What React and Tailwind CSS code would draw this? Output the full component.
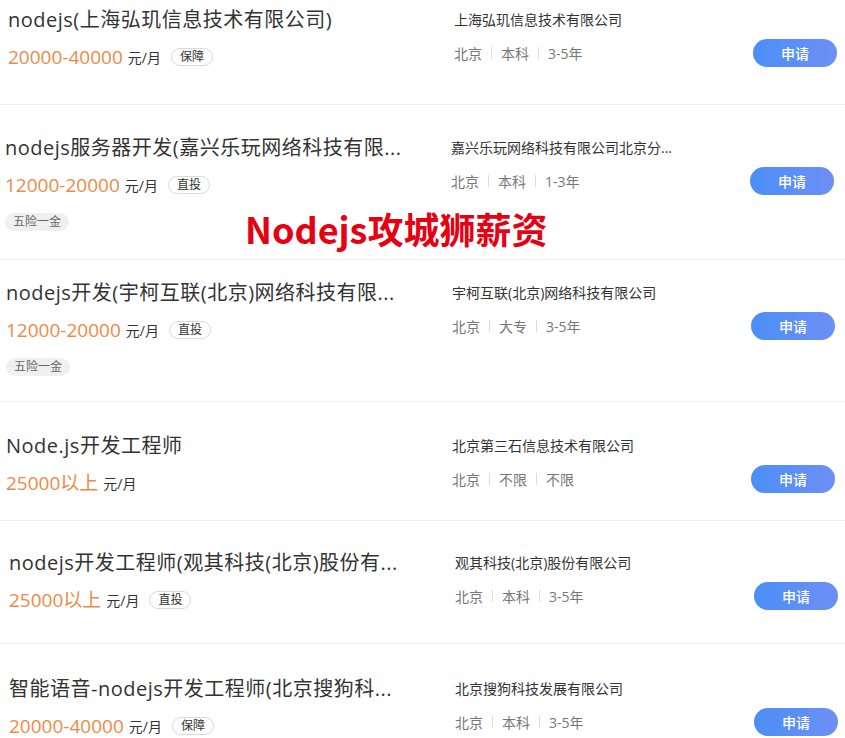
const JOBS = [
  {
    title: "nodejs(上海弘玑信息技术有限公司)",
    salary: "20000-40000",
    tag: "保障",
    company: "上海弘玑信息技术有限公司",
    meta: ["北京", "本科", "3-5年"],
    row: "h-[105px] pt-[6px] pl-[8px]",
  },
  {
    title: "nodejs服务器开发(嘉兴乐玩网络科技有限...",
    salary: "12000-20000",
    tag: "直投",
    welfare: "五险一金",
    company: "嘉兴乐玩网络科技有限公司北京分...",
    meta: ["北京", "本科", "1-3年"],
    row: "h-[155px] pt-[29px] pl-[5px]",
  },
  {
    title: "nodejs开发(宇柯互联(北京)网络科技有限...",
    salary: "12000-20000",
    tag: "直投",
    welfare: "五险一金",
    company: "宇柯互联(北京)网络科技有限公司",
    meta: ["北京", "大专", "3-5年"],
    row: "h-[142px] pt-[19px] pl-[6px]",
  },
  {
    title: "Node.js开发工程师",
    salary: "25000以上",
    company: "北京第三石信息技术有限公司",
    meta: ["北京", "不限", "不限"],
    row: "h-[119px] pt-[30px] pl-[6px]",
  },
  {
    title: "nodejs开发工程师(观其科技(北京)股份有...",
    salary: "25000以上",
    tag: "直投",
    company: "观其科技(北京)股份有限公司",
    meta: ["北京", "本科", "3-5年"],
    row: "h-[123px] pt-[28px] pl-[9px]",
  },
  {
    title: "智能语音-nodejs开发工程师(北京搜狗科...",
    salary: "20000-40000",
    tag: "保障",
    company: "北京搜狗科技发展有限公司",
    meta: ["北京", "本科", "3-5年"],
    row: "h-[95px] pt-[31px] pl-[9px]",
  },
];

function JobRow({ job, last }) {
  return (
    <div className={`flex items-start ${job.row} ${last ? "" : "border-b border-[#eeeeee]"}`}>
      {/* ── left: title / salary / welfare ── */}
      <div className="w-[446px] shrink-0">
        <div className="h-[28px] leading-[28px] text-[20px] tracking-[0.5px] text-[#333333] whitespace-nowrap">{job.title}</div>
        <div className="mt-[9px] h-[28px] flex items-center">
          <span className="text-[19px] text-[#ee8a45]">{job.salary}</span>
          <span className="ml-[5px] text-[14px] text-[#333333]">元/月</span>
          {job.tag && (
            <span className="ml-[10px] h-[18px] px-[8px] leading-[16px] text-[12px] text-[#333333] border border-[#d9d9d9] rounded-full">
              {job.tag}
            </span>
          )}
        </div>
        {job.welfare && (
          <div className="mt-[14px] flex">
            <span className="h-[18px] px-[8px] leading-[18px] text-[12px] text-[#666666] bg-[#f0f0f0] rounded-full">
              {job.welfare}
            </span>
          </div>
        )}
      </div>

      {/* ── middle: company / meta ── */}
      <div className="w-[298px] shrink-0">
        <div className="h-[28px] leading-[28px] text-[14px] text-[#333333] whitespace-nowrap">{job.company}</div>
        <div className="mt-[9px] h-[20px] flex items-center text-[14px] text-[#777777]">
          {job.meta.map((m, i) => (
            <span key={i} className="flex items-center">
              {i > 0 && <span className="mx-[9px] w-px h-[12px] bg-[#dddddd]" />}
              {m}
            </span>
          ))}
        </div>
      </div>

      {/* ── right: apply ── */}
      <button className="mt-[33px] ml-px w-[84px] h-[28px] rounded-full bg-gradient-to-r from-[#4a8ff6] to-[#6c8ff6] text-white text-[14px] font-medium">
        申请
      </button>
    </div>
  );
}

export default function App() {
  return (
    <div className="relative w-[845px] h-[738px] overflow-hidden bg-white font-['Open_Sans','Noto_Sans_CJK_SC',sans-serif]">
      {JOBS.map((job, i) => (
        <JobRow key={i} job={job} last={i === JOBS.length - 1} />
      ))}

      {/* watermark title over the list */}
      <div className="absolute left-[245px] top-[205px] text-[36px] leading-[46px] font-bold text-[#e60012] whitespace-nowrap font-['Noto_Sans_CJK_SC',sans-serif]">
        Nodejs攻城狮薪资
      </div>
    </div>
  );
}
